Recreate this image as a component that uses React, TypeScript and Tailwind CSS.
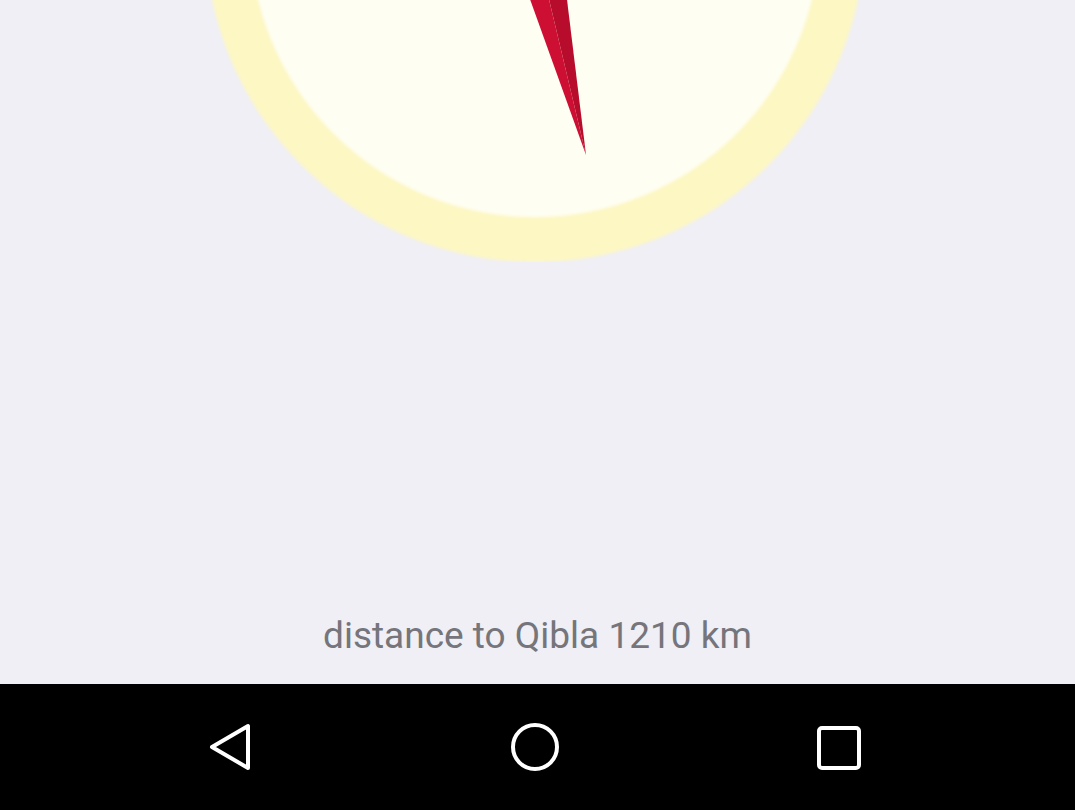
export default function App() {
  return (
    <div className="w-[1075px] h-[810px] flex flex-col bg-[#efeff5] overflow-hidden" style={{ fontFamily: "Roboto, 'Noto Sans', sans-serif" }}>
      <div className="flex-1 flex flex-col">
        <svg width="1075" height="262" viewBox="0 0 1075 262" className="block">
          <defs>
            <filter id="soft" x="-10%" y="-10%" width="120%" height="120%">
              <feGaussianBlur stdDeviation="1.5" />
            </filter>
          </defs>
          <circle cx="535" cy="-68" r="330" fill="#fdf7c4" filter="url(#soft)" />
          <circle cx="535" cy="-68" r="285" fill="#fefef3" filter="url(#soft)" />
          <polygon points="508,-62 533,-68 586,155" fill="#cc0f32" />
          <polygon points="558,-74 533,-68 586,155" fill="#b80c2c" />
        </svg>
        <div className="flex-1" />
        <div className="pb-[26px] flex justify-center">
          <span className="text-[37px] leading-[44px] text-[#75757b]">distance to Qibla 1210 km</span>
        </div>
      </div>
      <div className="h-[126px] bg-black flex items-center justify-center gap-[256px] pr-[5px] pt-[2px]">
        <svg width="48" height="54" viewBox="0 0 48 54">
          <polygon points="5,26 41,5 41,47" fill="none" stroke="#fff" strokeWidth="4" strokeLinejoin="round" />
        </svg>
        <svg width="48" height="54" viewBox="0 0 48 54">
          <circle cx="24" cy="26" r="22" fill="none" stroke="#fff" strokeWidth="4" />
        </svg>
        <svg width="48" height="54" viewBox="0 0 48 54">
          <rect x="4" y="7" width="40" height="40" rx="3" fill="none" stroke="#fff" strokeWidth="4" />
        </svg>
      </div>
    </div>
  );
}
